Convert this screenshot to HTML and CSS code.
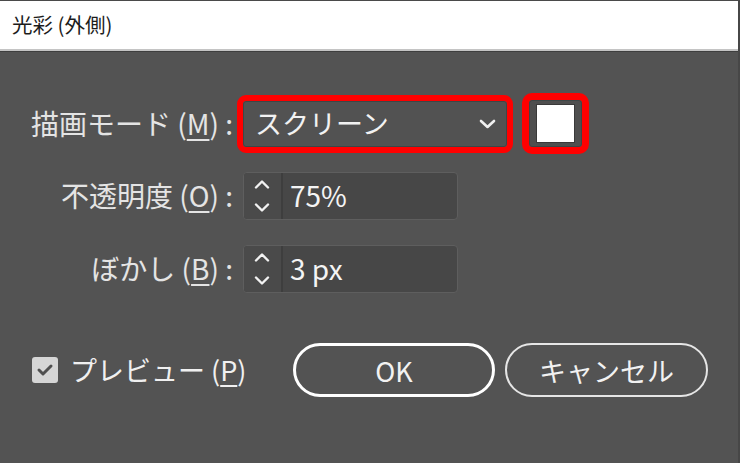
FILE: index.html
```html
<!DOCTYPE html>
<html lang="ja">
<head>
<meta charset="utf-8">
<title>光彩 (外側)</title>
<link rel="stylesheet" href="styles.css">
</head>
<body>
<div class="window">
  <div class="titlebar"><span class="title">光彩 (外側)</span></div>
  <div class="content">
    <div class="form">
      <div class="label">描画モード (<u>M</u>) :</div>
      <div class="field">
        <div class="select hl">
          <span class="select-text">スクリーン</span>
          <svg class="chev" width="17" height="10" viewBox="0 0 17 10"><path d="M2 2 L8.5 8 L15 2" fill="none" stroke="#f0f0f0" stroke-width="2.6" stroke-linecap="round" stroke-linejoin="round"/></svg>
        </div>
        <div class="swatch hl"><div class="swatch-color"></div></div>
      </div>

      <div class="label">不透明度 (<u>O</u>) :</div>
      <div class="field">
        <div class="stepper">
          <div class="arrows">
            <svg width="16" height="9" viewBox="0 0 16 9"><path d="M2 7.5 L8 1.5 L14 7.5" fill="none" stroke="#f2f2f2" stroke-width="2.4" stroke-linecap="round" stroke-linejoin="round"/></svg>
            <svg width="16" height="9" viewBox="0 0 16 9"><path d="M2 1.5 L8 7.5 L14 1.5" fill="none" stroke="#f2f2f2" stroke-width="2.4" stroke-linecap="round" stroke-linejoin="round"/></svg>
          </div>
          <div class="value">75%</div>
        </div>
      </div>

      <div class="label">ぼかし (<u>B</u>) :</div>
      <div class="field">
        <div class="stepper">
          <div class="arrows">
            <svg width="16" height="9" viewBox="0 0 16 9"><path d="M2 7.5 L8 1.5 L14 7.5" fill="none" stroke="#f2f2f2" stroke-width="2.4" stroke-linecap="round" stroke-linejoin="round"/></svg>
            <svg width="16" height="9" viewBox="0 0 16 9"><path d="M2 1.5 L8 7.5 L14 1.5" fill="none" stroke="#f2f2f2" stroke-width="2.4" stroke-linecap="round" stroke-linejoin="round"/></svg>
          </div>
          <div class="value">3 px</div>
        </div>
      </div>
    </div>

    <div class="footer">
      <div class="preview">
        <div class="checkbox">
          <svg width="18" height="14" viewBox="0 0 18 14"><path d="M3 7 L7 11 L15 3" fill="none" stroke="#505050" stroke-width="3" stroke-linecap="round" stroke-linejoin="round"/></svg>
        </div>
        <span class="preview-label">プレビュー (<u>P</u>)</span>
      </div>
      <div class="buttons">
        <div class="btn btn-primary">OK</div>
        <div class="btn">キャンセル</div>
      </div>
    </div>
  </div>
</div>
</body>
</html>
```

FILE: styles.css
```css
* { box-sizing: border-box; }
html, body { margin: 0; padding: 0; }
body {
  width: 740px;
  height: 463px;
  overflow: hidden;
  background: #535353;
  font-family: "Noto Sans CJK JP", "Noto Sans", sans-serif;
}
.window {
  width: 740px;
  height: 463px;
  background: #535353;
  border-top: 1px solid #4a4a4a;
  border-right: 2px solid #474747;
  display: flex;
  flex-direction: column;
}
.titlebar {
  height: 50px;
  background: #ffffff;
  border-bottom: 2px solid #c4c4c4;
  box-shadow: 0 1px 0 #3e3e3e;
  display: flex;
  align-items: center;
  padding-left: 12px;
  flex-shrink: 0;
}
.title {
  font-size: 20.5px;
  color: #1c1c1c;
  margin-top: -2px;
}
.content {
  flex: 1;
  display: flex;
  flex-direction: column;
  padding-top: 49px;
}
.form {
  display: grid;
  grid-template-columns: 233px auto;
  column-gap: 10px;
  row-gap: 25px;
  align-items: center;
}
.label {
  text-align: right;
  color: #e4e4e4;
  font-size: 28px;
  line-height: 1;
  white-space: nowrap;
  margin-top: -2px;
}
u {
  text-decoration: underline;
  text-decoration-thickness: 2px;
  text-underline-offset: 4px;
}
.field {
  display: flex;
  align-items: center;
}
.hl {
  outline: 6px solid #ff0000;
  outline-offset: 0;
}
.select {
  width: 264px;
  height: 46px;
  border: 1px solid #3c4747;
  border-radius: 3px;
  background: #525252;
  display: flex;
  align-items: center;
  justify-content: space-between;
  padding: 0 10px 0 11px;
}
.select-text {
  color: #f2f2f2;
  font-size: 27px;
  line-height: 1;
  margin-top: -2px;
}
.chev { margin-top: 1px; }
.swatch {
  margin-left: 22px;
  width: 53px;
  height: 47px;
  outline-width: 7px;
  border: 1px solid #3c4747;
  border-radius: 3px;
  background: #4f4f4f;
  display: flex;
  align-items: center;
  justify-content: center;
}
.swatch-color {
  width: 39px;
  height: 39px;
  background: #ffffff;
  border: 1px solid #3a3a3a;
  margin-left: -1px;
}
.stepper {
  width: 215px;
  height: 48px;
  border: 1px solid #5e5e5e;
  border-radius: 4px;
  background: #474747;
  display: flex;
  overflow: hidden;
}
.arrows {
  width: 39px;
  background: #4a4a4a;
  border-right: 2px solid #3e3e3e;
  display: flex;
  flex-direction: column;
  align-items: center;
  justify-content: center;
  gap: 14px;
  padding-right: 1px;
}
.value {
  display: flex;
  align-items: center;
  padding-left: 7px;
  color: #f4f4f4;
  font-size: 28px;
  line-height: 1;
  margin-top: -2px;
}
.footer {
  display: flex;
  align-items: center;
  justify-content: space-between;
  padding: 0 30px 0 32px;
  margin-top: 50px;
}
.preview {
  display: flex;
  align-items: center;
  gap: 12px;
}
.checkbox {
  width: 26px;
  height: 26px;
  border-radius: 3px;
  background: #d6d6d6;
  display: flex;
  align-items: center;
  justify-content: center;
}
.preview-label {
  color: #f0f0f0;
  font-size: 27px;
  line-height: 1;
  margin-top: -2px;
}
.buttons {
  display: flex;
  gap: 10px;
}
.btn {
  width: 203px;
  height: 54px;
  border: 2px solid #e6e6e6;
  border-radius: 27px;
  display: flex;
  align-items: center;
  justify-content: center;
  color: #f2f2f2;
  font-size: 27px;
  line-height: 1;
}
.btn-primary {
  width: 202px;
  border: 3px solid #ffffff;
}
```
